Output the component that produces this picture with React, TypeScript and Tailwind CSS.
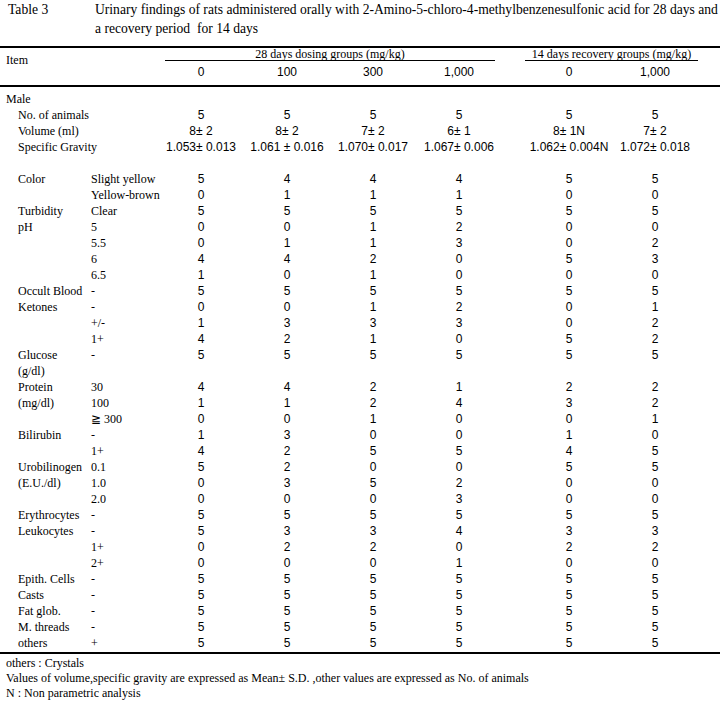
import React from 'react';

type Row = { label?: string; sub?: string; vals?: string[] };

const rows: Row[] = [
  { label: 'No. of animals', vals: ['5', '5', '5', '5', '5', '5'] },
  { label: 'Volume (ml)', vals: ['8\u00b1 2', '8\u00b1 2', '7\u00b1 2', '6\u00b1 1', '8\u00b1 1N', '7\u00b1 2'] },
  {
    label: 'Specific Gravity',
    vals: ['1.053\u00b1 0.013', '1.061 \u00b1 0.016', '1.070\u00b1 0.017', '1.067\u00b1 0.006', '1.062\u00b1 0.004N', '1.072\u00b1 0.018'],
  },
  {},
  { label: 'Color', sub: 'Slight yellow', vals: ['5', '4', '4', '4', '5', '5'] },
  { sub: 'Yellow-brown', vals: ['0', '1', '1', '1', '0', '0'] },
  { label: 'Turbidity', sub: 'Clear', vals: ['5', '5', '5', '5', '5', '5'] },
  { label: 'pH', sub: '5', vals: ['0', '0', '1', '2', '0', '0'] },
  { sub: '5.5', vals: ['0', '1', '1', '3', '0', '2'] },
  { sub: '6', vals: ['4', '4', '2', '0', '5', '3'] },
  { sub: '6.5', vals: ['1', '0', '1', '0', '0', '0'] },
  { label: 'Occult Blood', sub: '-', vals: ['5', '5', '5', '5', '5', '5'] },
  { label: 'Ketones', sub: '-', vals: ['0', '0', '1', '2', '0', '1'] },
  { sub: '+/-', vals: ['1', '3', '3', '3', '0', '2'] },
  { sub: '1+', vals: ['4', '2', '1', '0', '5', '2'] },
  { label: 'Glucose', sub: '-', vals: ['5', '5', '5', '5', '5', '5'] },
  { label: '(g/dl)' },
  { label: 'Protein', sub: '30', vals: ['4', '4', '2', '1', '2', '2'] },
  { label: '(mg/dl)', sub: '100', vals: ['1', '1', '2', '4', '3', '2'] },
  { sub: '\u2267 300', vals: ['0', '0', '1', '0', '0', '1'] },
  { label: 'Bilirubin', sub: '-', vals: ['1', '3', '0', '0', '1', '0'] },
  { sub: '1+', vals: ['4', '2', '5', '5', '4', '5'] },
  { label: 'Urobilinogen', sub: '0.1', vals: ['5', '2', '0', '0', '5', '5'] },
  { label: '(E.U./dl)', sub: '1.0', vals: ['0', '3', '5', '2', '0', '0'] },
  { sub: '2.0', vals: ['0', '0', '0', '3', '0', '0'] },
  { label: 'Erythrocytes', sub: '-', vals: ['5', '5', '5', '5', '5', '5'] },
  { label: 'Leukocytes', sub: '-', vals: ['5', '3', '3', '4', '3', '3'] },
  { sub: '1+', vals: ['0', '2', '2', '0', '2', '2'] },
  { sub: '2+', vals: ['0', '0', '0', '1', '0', '0'] },
  { label: 'Epith. Cells', sub: '-', vals: ['5', '5', '5', '5', '5', '5'] },
  { label: 'Casts', sub: '-', vals: ['5', '5', '5', '5', '5', '5'] },
  { label: 'Fat glob.', sub: '-', vals: ['5', '5', '5', '5', '5', '5'] },
  { label: 'M. threads', sub: '-', vals: ['5', '5', '5', '5', '5', '5'] },
  { label: 'others', sub: '+', vals: ['5', '5', '5', '5', '5', '5'] },
];

const numCell = "w-[86px] text-center font-['Liberation_Sans',sans-serif] text-[12px] whitespace-nowrap";

const DataRow: React.FC<{ row: Row }> = ({ row }) => {
  const vals = row.vals ?? [];
  return (
    <div className="flex h-[16px] items-center leading-[16px]">
      <div className="w-[91px] pl-[18px] whitespace-nowrap">{row.label}</div>
      <div className="w-[67px] whitespace-nowrap">{row.sub}</div>
      {vals.slice(0, 4).map((v, i) => (
        <div key={i} className={numCell}>{v}</div>
      ))}
      {vals.length > 0 && <div className="w-[24px]" />}
      {vals.slice(4).map((v, i) => (
        <div key={i + 4} className={numCell}>{v}</div>
      ))}
    </div>
  );
};

export default function App() {
  return (
    <div className="w-[726px] h-[706px] bg-white text-black font-['Liberation_Serif',serif] text-[12px] overflow-hidden">
      {/* title */}
      <div className="flex text-[13.6px] leading-[19px]">
        <div className="w-[95px] pl-[8px] whitespace-nowrap">Table 3</div>
        <div className="whitespace-nowrap">
          <div>Urinary findings of rats administered orally with 2-Amino-5-chloro-4-methylbenzenesulfonic acid for 28 days and</div>
          <div>a recovery period&nbsp; for 14 days</div>
        </div>
      </div>

      <div className="mt-[8px] h-[2px] w-[720px] bg-black" />

      {/* header */}
      <div className="flex h-[16px]">
        <div className="w-[165px] pl-[6px]">
          <div className="pt-[6px] leading-[12px]">Item</div>
        </div>
        <div className="w-[330px]">
          <div className="h-[12px] leading-[12px] text-center whitespace-nowrap">28 days dosing groups (mg/kg)</div>
          <div className="h-px bg-black" />
        </div>
        <div className="w-[30px]" />
        <div className="w-[173px]">
          <div className="h-[12px] leading-[12px] text-center whitespace-nowrap">14 days recovery groups (mg/kg)</div>
          <div className="h-px bg-black" />
        </div>
      </div>
      <div className="mt-[1px] flex h-[14px] items-center">
        <div className="w-[158px]" />
        {['0', '100', '300', '1,000'].map(v => (
          <div key={v} className={numCell}>{v}</div>
        ))}
        <div className="w-[24px]" />
        {['0', '1,000'].map(v => (
          <div key={'r' + v} className={numCell}>{v}</div>
        ))}
      </div>

      <div className="mt-[6px] h-[2px] w-[720px] bg-black" />

      {/* body */}
      <div className="pt-[4px]">
        <div className="h-[16px] leading-[16px] pl-[6px]">Male</div>
        {rows.map((r, i) => (
          <DataRow key={i} row={r} />
        ))}
      </div>

      <div className="mt-[1px] h-[2px] w-[720px] bg-black" />

      {/* notes */}
      <div className="pt-[2px] pl-[6px] leading-[15px] whitespace-nowrap">
        <div>others : Crystals</div>
        <div>Values of volume,specific gravity are expressed as Mean&plusmn; S.D. ,other values are expressed as No. of animals</div>
        <div>N : Non parametric analysis</div>
      </div>
    </div>
  );
}
